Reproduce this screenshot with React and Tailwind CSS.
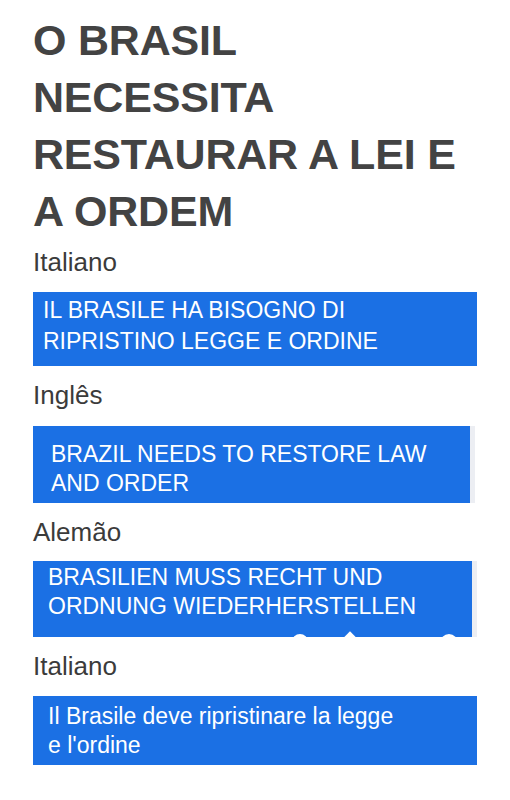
import React from "react";

const blocks = [
    {
        label: "Italiano",
        lines: ["IL BRASILE HA BISOGNO DI", "RIPRISTINO LEGGE E ORDINE"],
        wrap: "mt-[14px]",
        box: "w-[444px] h-[74px] pl-[10px] pt-[3px] leading-[31px]",
        edge: false,
    },
    {
        label: "Inglês",
        lines: ["BRAZIL NEEDS TO RESTORE LAW", "AND ORDER"],
        wrap: "mt-[15px]",
        box: "w-[437px] h-[77px] pl-[18px] pt-[14px] leading-[29px]",
        edge: true,
    },
    {
        label: "Alemão",
        lines: ["BRASILIEN MUSS RECHT UND", "ORDNUNG WIEDERHERSTELLEN"],
        wrap: "mt-[13px]",
        box: "w-[439px] h-[76px] pl-[15px] pt-[2px] leading-[29px]",
        edge: true,
        bumps: true,
    },
    {
        label: "Italiano",
        lines: ["Il Brasile deve ripristinare la legge", "e l'ordine"],
        wrap: "mt-[14px]",
        box: "w-[444px] h-[69px] pl-[15px] pt-[6px] leading-[29px]",
        edge: false,
    },
];

export default function App() {
    return (
        <div
            className="min-h-screen bg-white pl-[33px] pt-[12px]"
            style={{ fontFamily: '"Liberation Sans", Arial, sans-serif' }}
        >
            {/* Title */}
            <h1 className="text-[43px] leading-[57px] font-bold text-[#434343] tracking-[-0.2px]">
                O BRASIL
                <br />
                NECESSITA
                <br />
                RESTAURAR A LEI E
                <br />
                A ORDEM
            </h1>

            {blocks.map((b, i) => (
                <div key={i} className={i === 0 ? "mt-[6px]" : "mt-[13px]"}>
                    <p className="text-[26px] leading-[32px] text-[#3b3b3b]">
                        {b.label}
                    </p>
                    <div className={`flex ${b.wrap}`}>
                        <div
                            className={`relative overflow-hidden bg-[#1b70e4] text-white text-[23px] ${b.box}`}
                        >
                            {b.lines.map((l, j) => (
                                <div key={j}>{l}</div>
                            ))}
                            {b.bumps && (
                                <>
                                    <span className="absolute left-[259px] top-[73px] w-[16px] h-[16px] rounded-full bg-white" />
                                    <span className="absolute left-[313px] top-[72px] w-[8px] h-[8px] rotate-45 bg-white" />
                                    <span className="absolute left-[407px] top-[73px] w-[18px] h-[18px] rounded-full bg-white" />
                                </>
                            )}
                        </div>
                        {b.edge && <div className="w-[5px] bg-[#eceef3]" />}
                    </div>
                </div>
            ))}
        </div>
    );
}
